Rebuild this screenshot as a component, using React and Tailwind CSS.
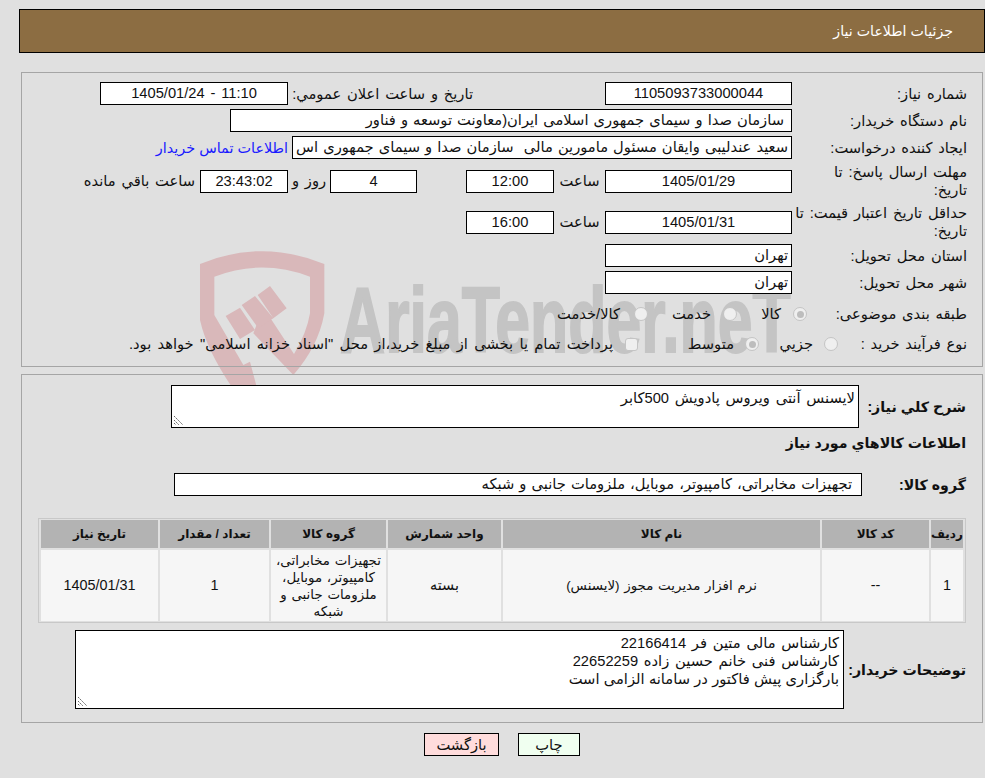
const Box = ({ className = '', children, ...rest }) => (
  <div {...rest} className={`h-[23px] shrink-0 overflow-hidden whitespace-pre border border-black bg-white leading-[21px] ${className}`}>{children}</div>
)

const Radio = ({ checked }) => (
  <span className="flex h-[14px] w-[14px] shrink-0 items-center justify-center rounded-full border border-[#c4c4c4] bg-[#efefef]">
    {checked && <span className="h-[7px] w-[7px] rounded-full bg-[#bdbdbd]" />}
  </span>
)

const Grip = () => (
  <svg className="absolute bottom-[1px] left-[1px]" width="11" height="11" viewBox="0 0 11 11">
    <path d="M1 1L10 10M1 5L6 10M1 8L3 10" stroke="#666" strokeWidth="1" strokeDasharray="2 1" fill="none" />
  </svg>
)

// the site's logo sits behind both panels
const Watermark = () => (
  <div className="pointer-events-none absolute left-[190px] top-[240px] h-[160px] w-[640px]">
    <svg className="absolute left-0 top-0" width="320" height="160" viewBox="0 0 960 480">
      <path d="M30 72Q215 -5 403 72V220Q385 320 310 405L190 280L215 215L245 240L312 342Q350 280 360 220V110Q215 55 73 110V225L160 375L180 365L200 440L125 440Q50 330 30 240Z" fill="#d9b8ba" />
      <path d="M107 228L150 203L195 270L150 297Z M155 195L195 168L250 235L205 265Z M203 165L240 138L290 205L250 235Z" fill="#d9b8ba" />
    </svg>
    <div dir="ltr" className="absolute left-[150px] top-[34px] origin-left scale-x-[0.68] whitespace-nowrap font-['Liberation_Sans',sans-serif] text-[92px] font-bold leading-[92px] text-[#c4c4c4] [-webkit-text-stroke:2px_#c4c4c4] [word-spacing:0]">AriaTender.neT</div>
  </div>
)

const columns = [
  { title: 'ردیف', value: '1', size: 'text-[14.4px]' },
  { title: 'کد کالا', value: '--', size: 'text-[14.4px]' },
  { title: 'نام کالا', value: 'نرم افزار مدیریت مجوز (لایسنس)', size: 'text-[13.4px]' },
  { title: 'واحد شمارش', value: 'بسته', size: 'text-[14.4px]' },
  { title: 'گروه کالا', value: 'تجهیزات مخابراتی، کامپیوتر، موبایل، ملزومات جانبی و شبکه', size: 'text-[13.4px]' },
  { title: 'تعداد / مقدار', value: '1', size: 'text-[14.4px]' },
  { title: 'تاریخ نیاز', value: '1405/01/31', size: 'text-[14.4px]' },
]

export default function App() {
  return (
    <div dir="rtl" className="relative flex h-[778px] w-[985px] flex-col overflow-hidden bg-[#e0e0e0] pt-[9px] font-['Liberation_Sans','DejaVu_Sans',sans-serif] text-[14.7px] leading-[18px] text-[#111] [word-spacing:1.7px]">
      <Watermark />

      <div className="relative ml-[19px] flex h-[44px] items-center border border-black bg-[#8c6d42] pr-[31px] text-[14.2px] text-white [word-spacing:0]">
        جزئیات اطلاعات نیاز
      </div>

      {/* first panel */}
      <div className="relative ml-[21px] mr-[2px] mt-[19px] flex h-[295px] flex-col border border-[#a5a5a5] pr-[15px] pt-[9px]">
        <div className="flex h-[23px] items-center">
          <div className="w-[175px] shrink-0">شماره نیاز:</div>
          <Box className="w-[187px] text-center">1105093733000044</Box>
          <div className="mr-[132px] w-[185px] shrink-0">تاریخ و ساعت اعلان عمومي:</div>
          <Box dir="ltr" className="w-[188px] text-center">1405/01/24 - 11:10</Box>
        </div>

        <div className="mt-[4px] flex h-[23px] items-center">
          <div className="w-[175px] shrink-0">نام دستگاه خریدار:</div>
          <Box className="w-[562px] pr-[7px] [word-spacing:1px]">سازمان صدا و سیمای جمهوری اسلامی ایران(معاونت توسعه و فناور</Box>
        </div>

        <div className="mt-[4px] flex h-[23px] items-center">
          <div className="w-[175px] shrink-0">ایجاد کننده درخواست:</div>
          <Box className="w-[500px] pr-[3px] [word-spacing:1px]">سعید عندلیبی وایقان مسئول مامورین مالی  سازمان صدا و سیمای جمهوری اس</Box>
          <a className="mr-[4px] whitespace-nowrap text-[14.4px] text-[#1a1aff] [word-spacing:0]">اطلاعات تماس خریدار</a>
        </div>

        <div className="mt-[5px] flex h-[34px] items-center">
          <div className="w-[175px] shrink-0 pl-[20px]">مهلت ارسال پاسخ: تا تاریخ:</div>
          <Box className="h-[22px] w-[187px] text-center">1405/01/29</Box>
          <div className="w-[51px] shrink-0 text-center">ساعت</div>
          <Box className="h-[22px] w-[88px] text-center">12:00</Box>
          <div className="w-[49px] shrink-0" />
          <Box className="h-[22px] w-[87px] text-center">4</Box>
          <div className="w-[42px] shrink-0 text-center">روز و</div>
          <Box className="h-[22px] w-[88px] bg-[#fffff0] text-center">23:43:02</Box>
          <div className="mr-[5px] whitespace-nowrap">ساعت باقي مانده</div>
        </div>

        <div className="mt-[7px] flex h-[34px] items-center">
          <div className="w-[175px] shrink-0">حداقل تاریخ اعتبار قیمت: تا تاریخ:</div>
          <Box className="w-[187px] text-center">1405/01/31</Box>
          <div className="w-[51px] shrink-0 text-center">ساعت</div>
          <Box className="w-[88px] text-center">16:00</Box>
        </div>

        <div className="mt-[5px] flex h-[23px] items-center">
          <div className="w-[175px] shrink-0">استان محل تحویل:</div>
          <Box className="w-[187px] pr-[3px]">تهران</Box>
        </div>

        <div className="mt-[4px] flex h-[23px] items-center">
          <div className="w-[175px] shrink-0">شهر محل تحویل:</div>
          <Box className="w-[187px] pr-[3px]">تهران</Box>
        </div>

        <div className="mt-[10px] flex h-[20px] items-center">
          <div className="w-[160px] shrink-0">طبقه بندی موضوعی:</div>
          <Radio checked />
          <div className="w-[56px] shrink-0 pr-[12px]">کالا</div>
          <Radio />
          <div className="w-[75px] shrink-0 pr-[12px]">خدمت</div>
          <Radio />
          <div className="pr-[14px]">کالا/خدمت</div>
        </div>

        <div className="mt-[10px] flex h-[20px] items-center">
          <div className="w-[129px] shrink-0">نوع فرآیند خرید :</div>
          <Radio />
          <div className="w-[65px] shrink-0 pr-[11px]">جزيي</div>
          <Radio checked />
          <div className="w-[107px] shrink-0 pr-[11px]">متوسط</div>
          <span className="h-[13px] w-[13px] shrink-0 rounded-[3px] border border-[#c4c4c4] bg-[#efefef]" />
          <div className="whitespace-nowrap pr-[12px] [word-spacing:2.2px]">پرداخت تمام یا بخشی از مبلغ خرید،از محل "اسناد خزانه اسلامی" خواهد بود.</div>
        </div>
      </div>

      {/* second panel */}
      <div className="relative ml-[21px] mr-[2px] mt-[7px] flex h-[349px] flex-col border border-[#a5a5a5] pr-[16px] pt-[10px]">
        <div className="flex items-center">
          <div className="w-[107px] shrink-0 whitespace-nowrap text-[14.2px] font-bold [word-spacing:0]">شرح کلي نیاز:</div>
          <div className="relative h-[43px] w-[688px] border border-black bg-white pr-[3px] pt-[3px]">
            لایسنس آنتی ویروس پادویش 500کابر
            <Grip />
          </div>
        </div>

        <div className="mt-[6px] text-[14.2px] font-bold [word-spacing:0]">اطلاعات کالاهاي مورد نیاز</div>

        <div className="mt-[21px] flex items-center">
          <div className="w-[104px] shrink-0 whitespace-nowrap text-[14.2px] font-bold [word-spacing:0]">گروه کالا:</div>
          <Box className="w-[688px] pr-[9px] [word-spacing:1px]">تجهیزات مخابراتی، کامپیوتر، موبایل، ملزومات جانبی و شبکه</Box>
        </div>

        <div className="mt-[22px] grid w-[928px] grid-cols-[32px_107px_317px_113px_115px_109px_117px] grid-rows-[28px_71px] gap-[2px] self-start border border-[#c8c8c8] px-[2px] py-[1px]">
          {columns.map(col => (
            <div key={col.title} className="flex items-center justify-center bg-[#b3b3b3] text-[12px] font-bold [word-spacing:0]">{col.title}</div>
          ))}
          {columns.map(col => (
            <div key={col.title} className={`flex items-center justify-center bg-[#f6f6f6] text-center leading-[17px] [word-spacing:1px] ${col.size}`}>{col.value}</div>
          ))}
        </div>

        <div className="mt-[7px] flex items-center">
          <div className="w-[122px] shrink-0 whitespace-nowrap text-[14.2px] font-bold [word-spacing:0]">توضیحات خریدار:</div>
          <div className="relative h-[79px] w-[769px] border border-black bg-white pr-[4px] pt-[3px]">
            <div>کارشناس مالی متین فر 22166414</div>
            <div>کارشناس فنی خانم حسین زاده 22652259</div>
            <div className="[word-spacing:0.2px]">بارگزاری پیش فاکتور در سامانه الزامی است</div>
            <Grip />
          </div>
        </div>
      </div>

      <div className="relative mt-[10px] flex justify-center gap-[19px] pl-[19px]">
        <button className="h-[23px] w-[62px] border border-black bg-[#f0fff0]">چاپ</button>
        <button className="h-[23px] w-[75px] border border-black bg-[#ffdcdc]">بازگشت</button>
      </div>
    </div>
  )
}
